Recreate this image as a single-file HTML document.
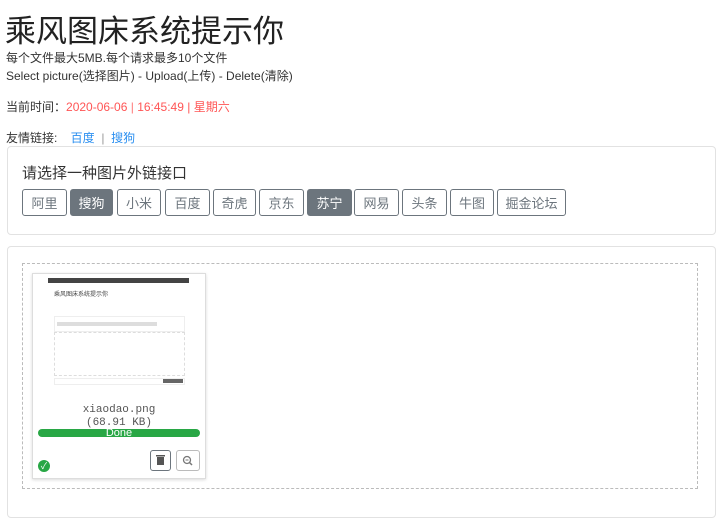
<!DOCTYPE html>
<html><head><meta charset="utf-8"><style>
body{margin:0;width:719px;height:504px;overflow:hidden;background:#fff;font-family:"Liberation Sans","Noto Sans CJK SC",sans-serif;color:#212529;position:relative}
.a{position:absolute;white-space:nowrap}
h1{margin:0;font-weight:400;font-size:31px;position:absolute;left:5px;top:6px;font-family:"Liberation Sans","Noto Sans CJK SC",sans-serif;color:#222}
.s{font-size:12px;color:#333}
.card{position:absolute;border:1px solid #e2e2e2;border-radius:4px;background:#fff}
.btn{position:absolute;top:189px;height:27px;border:1px solid #6c757d;border-radius:3px;font-size:13px;color:#6c757d;text-align:center;line-height:27px;box-sizing:border-box;background:#fff}
.btn.on{background:#6c757d;color:#fff}
</style></head><body>
<h1>乘风图床系统提示你</h1>
<div class="a s" style="left:6px;top:49px">每个文件最大5MB.每个请求最多10个文件</div>
<div class="a s" style="left:6px;top:67px">Select picture(选择图片) - Upload(上传) - Delete(清除)</div>
<div class="a s" style="left:6px;top:98px">当前时间：<span style="color:#f55">2020-06-06 <span style="color:#f77">|</span> 16:45:49 <span style="color:#f55">|</span> 星期六</span></div>
<div class="a s" style="left:6px;top:129px">友情链接: &nbsp;&nbsp; <span style="color:#2b8ff0">百度</span> &nbsp;<span style="color:#999">|</span>&nbsp; <span style="color:#2b8ff0">搜狗</span></div>
<div class="card" style="left:7px;top:146px;width:707px;height:87px"></div>
<div class="a" style="left:22px;top:162px;font-size:15px;color:#333">请选择一种图片外链接口</div>
<div class="btn" style="left:22px;width:45px">阿里</div>
<div class="btn on" style="left:70px;width:43px">搜狗</div>
<div class="btn" style="left:117px;width:44px">小米</div>
<div class="btn" style="left:165px;width:45px">百度</div>
<div class="btn" style="left:213px;width:43px">奇虎</div>
<div class="btn" style="left:259px;width:45px">京东</div>
<div class="btn on" style="left:307px;width:45px">苏宁</div>
<div class="btn" style="left:354px;width:45px">网易</div>
<div class="btn" style="left:402px;width:45px">头条</div>
<div class="btn" style="left:450px;width:44px">牛图</div>
<div class="btn" style="left:497px;width:69px">掘金论坛</div>
<div class="card" style="left:7px;top:246px;width:707px;height:270px"></div>
<div class="a" style="left:22px;top:263px;width:674px;height:224px;border:1px dashed #bbb"></div>
<div class="a" style="left:32px;top:273px;width:172px;height:204px;border:1px solid #ddd;box-shadow:0 1px 3px rgba(0,0,0,.15);background:#fff"></div>
<div class="a" style="left:48px;top:278px;width:141px;height:5px;background:#444"></div>
<div class="a" style="left:54px;top:289px;font-size:6px;color:#444">乘风图床系统提示你</div>
<div class="a" style="left:54px;top:316px;width:129px;height:14px;border:1px solid #eee"></div>
<div class="a" style="left:57px;top:322px;width:100px;height:4px;background:#ddd"></div>
<div class="a" style="left:54px;top:332px;width:129px;height:42px;border:1px dashed #ddd"></div>
<div class="a" style="left:54px;top:378px;width:129px;height:5px;border:1px solid #eee"></div>
<div class="a" style="left:163px;top:379px;width:20px;height:4px;background:#666"></div>
<div class="a" style="left:32px;top:404px;width:174px;text-align:center;font-family:'Liberation Mono',monospace;font-size:11px;color:#555;line-height:13px">xiaodao.png<br>(68.91 KB)</div>
<div class="a" style="left:38px;top:429px;width:162px;height:8px;background:#28a745;border-radius:4px;color:#fff;font-size:11px;line-height:8px;text-align:center">Done</div>
<div class="a" style="left:38px;top:460px;width:12px;height:12px;border-radius:50%;background:#28a745;color:#fff;font-size:9px;line-height:12px;text-align:center">✓</div>
<div class="a" style="left:150px;top:450px;width:21px;height:21px;border:1px solid #6c757d;border-radius:3px;box-sizing:border-box">
<svg width="19" height="19" viewBox="0 0 19 19"><rect x="6" y="6" width="7" height="8" fill="#555"/><rect x="5" y="4" width="9" height="1.5" fill="#555"/></svg></div>
<div class="a" style="left:176px;top:450px;width:24px;height:21px;border:1px solid #bbb;border-radius:3px;box-sizing:border-box">
<svg width="22" height="19" viewBox="0 0 22 19"><circle cx="10" cy="9" r="3.5" fill="none" stroke="#777" stroke-width="1.3"/><line x1="12.5" y1="11.5" x2="15" y2="14" stroke="#777" stroke-width="1.5"/><line x1="8.5" y1="9" x2="11.5" y2="9" stroke="#777"/></svg></div>
</body></html>
